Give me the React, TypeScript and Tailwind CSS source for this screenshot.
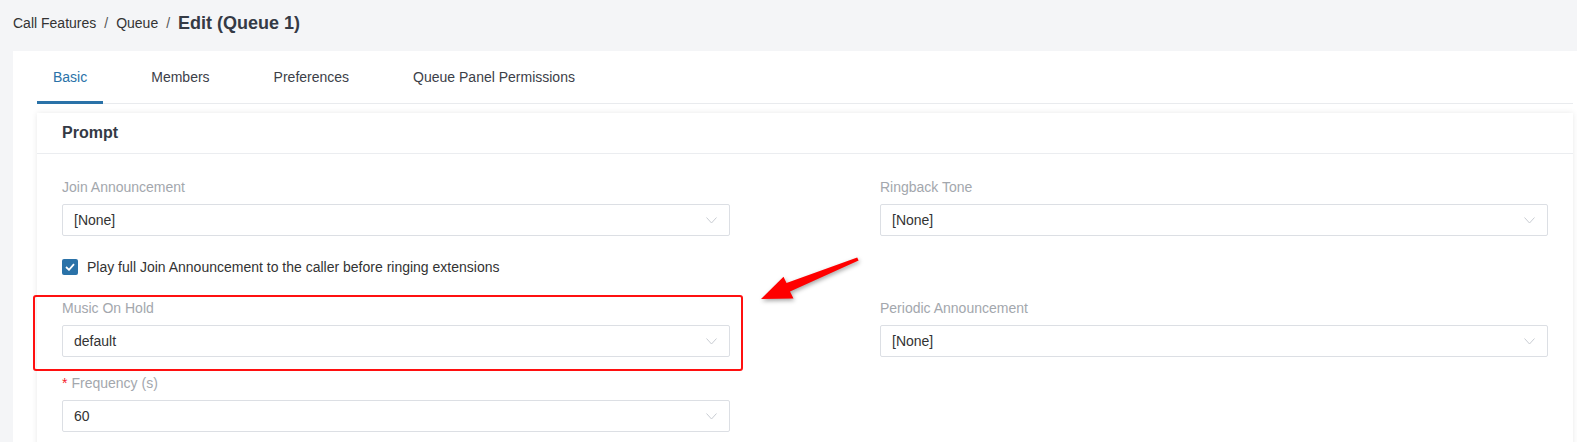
import type { ReactNode } from "react";

function Chevron() {
  return (
    <svg width="11" height="7" viewBox="0 0 11 7" className="shrink-0">
      <polyline points="0.5,0.5 5.5,6 10.5,0.5" fill="none" stroke="#c8ccd2" strokeWidth="1" />
    </svg>
  );
}

function Select({ value }: { value: string }) {
  return (
    <div className="flex h-[32px] items-center justify-between rounded-[2px] border border-[#dcdfe4] bg-white pl-[11px] pr-[12px] text-[14px] text-[#333]">
      <span>{value}</span>
      <Chevron />
    </div>
  );
}

function Field({ label, value, required }: { label: string; value: string; required?: boolean }) {
  return (
    <div>
      <div className="mb-[7px] h-[20px] text-[14px] leading-[20px] text-[#a3a7ad]">
        {required && <span className="mr-[4px] text-[#f5222d]">*</span>}
        {label}
      </div>
      <Select value={value} />
    </div>
  );
}

function Tab({ children, active }: { children: ReactNode; active?: boolean }) {
  return (
    <div
      className={
        active
          ? "-mb-px flex h-[53px] items-center border-b-[3px] border-[#2a72a8] px-4 pt-[3px] text-[14px] text-[#2a72a8]"
          : "-mb-px flex h-[53px] items-center border-b-[3px] border-transparent px-4 pt-[3px] text-[14px] text-[#3c4048]"
      }
    >
      {children}
    </div>
  );
}

export default function App() {
  return (
    <div className="relative min-h-screen overflow-hidden bg-[#f4f5f7] font-['Liberation_Sans',Arial,sans-serif]">
      {/* breadcrumb */}
      <div className="flex h-[51px] items-center gap-2 px-[13px] pb-[5px] text-[14px] text-[#333]">
        <span>Call Features</span>
        <span className="text-[#555]">/</span>
        <span>Queue</span>
        <span className="text-[#555]">/</span>
        <span className="text-[18px] font-bold text-[#343a45]">Edit (Queue 1)</span>
      </div>

      <div className="ml-[13px] bg-white pb-6 pl-6 pr-1">
        <div className="flex gap-8 border-b border-[#e9ebee]">
          <Tab active>Basic</Tab>
          <Tab>Members</Tab>
          <Tab>Preferences</Tab>
          <Tab>Queue Panel Permissions</Tab>
        </div>

        <div className="mt-[9px] bg-white shadow-[0_0_6px_rgba(0,0,0,0.09)]">
          <div className="flex h-[41px] items-center border-b border-[#ebedf0] px-[25px] text-[16px] font-bold text-[#343a45]">
            Prompt
          </div>

          <div className="grid grid-cols-2 gap-x-[150px] px-[25px] pb-6 pt-[23px]">
            <Field label="Join Announcement" value="[None]" />
            <Field label="Ringback Tone" value="[None]" />

            <div className="mt-[21px] flex h-[20px] items-center gap-[9px] text-[14px] text-[#333]">
              <span className="flex h-[16px] w-[16px] items-center justify-center rounded-[2px] bg-[#2a72a8]">
                <svg width="10" height="8" viewBox="0 0 10 8">
                  <polyline points="1,4 4,6.8 9,1.2" fill="none" stroke="#fff" strokeWidth="1.8" />
                </svg>
              </span>
              Play full Join Announcement to the caller before ringing extensions
            </div>
            <div />

            <div className="relative mt-[21px]">
              <Field label="Music On Hold" value="default" />
              <div className="absolute -bottom-[14px] -left-[29px] -right-[13px] -top-[3px] rounded-[3px] border-2 border-[#ff1010]" />
            </div>
            <div className="mt-[21px]">
              <Field label="Periodic Announcement" value="[None]" />
            </div>

            <div className="mt-[16px]">
              <Field label="Frequency (s)" value="60" required />
            </div>
            <div />
          </div>
        </div>
      </div>

      {/* annotation arrow */}
      <svg
        width="110"
        height="50"
        viewBox="0 0 110 50"
        className="absolute left-[755px] top-[255px] drop-shadow-[1px_2px_2px_rgba(0,0,0,0.35)]"
      >
        <polygon
          points="6,44 38.5,43.5 35,36.5 103.6,5.6 102.2,2.4 31.5,28 28.5,21.8"
          fill="#ff0000"
        />
      </svg>
    </div>
  );
}
